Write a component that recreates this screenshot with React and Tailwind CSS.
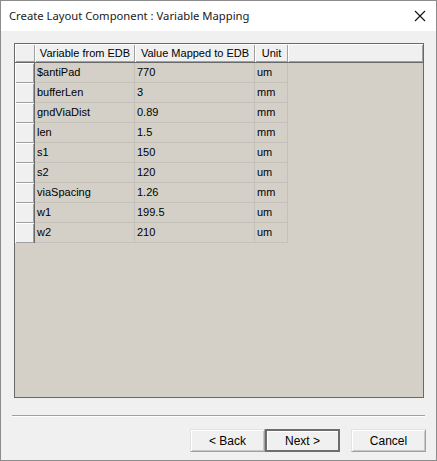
const rows = [
  { name: '$antiPad', value: '770', unit: 'um' },
  { name: 'bufferLen', value: '3', unit: 'mm' },
  { name: 'gndViaDist', value: '0.89', unit: 'mm' },
  { name: 'len', value: '1.5', unit: 'mm' },
  { name: 's1', value: '150', unit: 'um' },
  { name: 's2', value: '120', unit: 'um' },
  { name: 'viaSpacing', value: '1.26', unit: 'mm' },
  { name: 'w1', value: '199.5', unit: 'um' },
  { name: 'w2', value: '210', unit: 'um' },
];

const raised = 'bg-[#f0f0f0] shadow-[inset_1px_1px_0_#ffffff,inset_-1px_-1px_0_#a0a0a0]';

function HeaderCell({ width, children }) {
  return (
    <div className={`${width} h-full ${raised} flex items-center justify-center text-[11px] text-black`}>
      {children}
    </div>
  );
}

function DataCell({ width, children }) {
  return (
    <div className={`${width} h-full border-r border-b border-[#c4c1ba] flex items-center pl-[2px] text-[11px] text-black`}>
      {children}
    </div>
  );
}

function Button({ children, isDefault }) {
  return (
    <button
      className={`w-[75px] h-[23px] bg-[#f0f0f0] text-[12px] text-black flex items-center justify-center ${
        isDefault
          ? 'border-2 border-[#6d6d6d] shadow-[inset_1px_1px_0_#ffffff]'
          : 'border border-[#a0a0a0] border-t-[#e3e3e3] border-l-[#e3e3e3] shadow-[inset_1px_1px_0_#ffffff,inset_-1px_-1px_0_#c8c8c8]'
      }`}
    >
      {children}
    </button>
  );
}

export default function App() {
  return (
    <div
      className="w-[437px] h-[461px] border border-[#8c8c8c] bg-[#f0f0f0] flex flex-col"
      style={{ fontFamily: '"Liberation Sans", Arial, sans-serif' }}
    >
      <div className="h-[30px] bg-white flex items-center justify-between pl-[8px] pr-[9px] shrink-0">
        <span className="text-[11.25px] text-[#1a1a1a]" style={{ fontFamily: '"Noto Sans", "Liberation Sans", sans-serif' }}>
          Create Layout Component : Variable Mapping
        </span>
        <svg width="12" height="12" viewBox="0 0 12 12" className="mr-[1px]">
          <path d="M1 1L11 11M11 1L1 11" stroke="#111" strokeWidth="1.1" />
        </svg>
      </div>

      <div className="flex-1 flex flex-col px-[12px]">
        <div className="mt-[12px] ml-[1px] w-[410px] h-[355px] border border-[#696969] bg-[#d4d0c8] flex flex-col">
          <div className="h-[19px] flex border-b border-[#696969] shrink-0">
            <HeaderCell width="w-[20px]" />
            <HeaderCell width="w-[100px]">Variable from EDB</HeaderCell>
            <HeaderCell width="w-[120px]">Value Mapped to EDB</HeaderCell>
            <HeaderCell width="w-[33px]">Unit</HeaderCell>
            <HeaderCell width="w-[135px]" />
          </div>
          {rows.map((row) => (
            <div key={row.name} className="h-[20px] flex shrink-0">
              <div className={`w-[20px] h-full ${raised} border-r border-[#696969]`} />
              <DataCell width="w-[100px]">{row.name}</DataCell>
              <DataCell width="w-[120px]">{row.value}</DataCell>
              <DataCell width="w-[33px]">{row.unit}</DataCell>
            </div>
          ))}
        </div>

        <div className="mt-[17px] -mx-[1px] h-[2px] border-t border-[#a0a0a0] border-b border-b-white" />

        <div className="mt-[12px] -mr-[2px] flex justify-end">
          <Button>&lt; Back</Button>
          <Button isDefault>Next &gt;</Button>
          <div className="w-[11px]" />
          <Button>Cancel</Button>
        </div>
      </div>
    </div>
  );
}
